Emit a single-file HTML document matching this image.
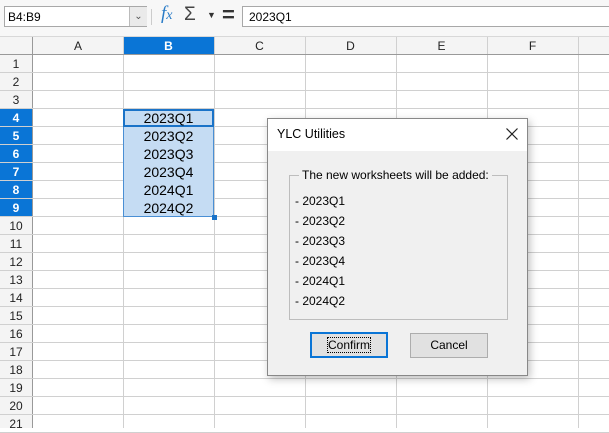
<!DOCTYPE html>
<html><head><style>
body{margin:0;width:609px;height:428px;overflow:hidden;background:#fff;font-family:"Liberation Sans",sans-serif;position:relative}
.a{position:absolute}
.tb{left:0;top:0;width:609px;height:36px;background:#f7f7f7;border-bottom:1px solid #d8d8d8}
.cell{font-size:14px;color:#000}
.vl{position:absolute;width:1px;background:#d0d0d0;top:37px;height:391px}
.hl{position:absolute;height:1px;background:#d0d0d0;left:0;width:609px}
.rh{position:absolute;left:0;width:32px;height:18px;line-height:18px;text-align:center;font-size:12px;color:#222}
.ch{position:absolute;top:37px;height:18px;line-height:18px;text-align:center;font-size:12px;color:#222}
</style></head><body>
<div class="a tb"></div>
<div class="a" style="left:4px;top:6px;width:143px;height:21px;border:1px solid #a8a8a8;background:#fff;font-size:12px;line-height:21px;padding-left:3px;box-sizing:border-box">B4:B9</div>
<div class="a" style="left:129px;top:7px;width:17px;height:19px;background:#eaeaea;border-left:1px solid #bbb;text-align:center;font-size:10px;line-height:19px;color:#555">&#8964;</div>
<div class="a" style="left:151px;top:9px;width:1px;height:16px;background:#ccc"></div>
<div class="a" style="left:161px;top:3px;font-family:'Liberation Serif',serif;font-style:italic;font-size:19px;color:#2a7cc7">f<span style="font-size:14px">x</span></div>
<div class="a" style="left:184px;top:4px;font-size:19px;color:#444">&Sigma;</div>
<div class="a" style="left:207px;top:10px;font-size:9px;color:#333">&#9660;</div>
<div class="a" style="left:222px;top:2px;font-size:22px;color:#333;font-weight:bold">=</div>
<div class="a" style="left:242px;top:6px;width:370px;height:21px;border:1px solid #a8a8a8;background:#fff;font-size:12px;line-height:21px;padding-left:6px;box-sizing:border-box">2023Q1</div>

<div class="a" style="left:0;top:37px;width:609px;height:18px;background:#f4f4f4"></div>
<div class="a" style="left:0;top:55px;width:32px;height:373px;background:#f4f4f4"></div>
<div class="a" style="left:123px;top:37px;width:91px;height:18px;background:#0a75d6"></div>
<div class="a" style="left:0;top:109px;width:32px;height:108px;background:#0a75d6"></div>
<div class="ch" style="left:33px;width:90px">A</div>
<div class="ch" style="left:123px;width:91px;color:#fff;font-weight:bold">B</div>
<div class="ch" style="left:214px;width:91px">C</div>
<div class="ch" style="left:305px;width:91px">D</div>
<div class="ch" style="left:396px;width:91px">E</div>
<div class="ch" style="left:487px;width:91px">F</div>

<div class="vl" style="left:32px;background:#999"></div><div class="vl" style="left:123px"></div><div class="vl" style="left:214px"></div><div class="vl" style="left:305px"></div><div class="vl" style="left:396px"></div><div class="vl" style="left:487px"></div><div class="vl" style="left:578px"></div>
<div class="hl" style="top:54px;background:#999"></div>
<div id="rows"></div>
<script>
var h='';for(var i=1;i<=21;i++){var t=55+(i-1)*18;h+='<div class="hl" style="top:'+(t+17)+'px"></div>';var s=(i>=4&&i<=9)?'color:#fff;font-weight:bold;':'';h+='<div class="rh" style="top:'+t+'px;'+s+'">'+i+'</div>';}
document.getElementById('rows').innerHTML=h;
</script>
<div class="a" style="left:123px;top:109px;width:91px;height:108px;background:#c5dcf3;border:1px solid #4a8fd4;box-sizing:border-box"></div>
<div class="a" style="left:123px;top:109px;width:91px;height:18px;border:2px solid #1a73c8;box-sizing:border-box"></div>
<div class="a" style="left:212px;top:215px;width:5px;height:5px;background:#1a73c8"></div>
<div class="a cell" style="left:123px;top:109px;width:91px;text-align:center;line-height:18px">2023Q1<br>2023Q2<br>2023Q3<br>2023Q4<br>2024Q1<br>2024Q2</div>

<div class="a" style="left:267px;top:118px;width:261px;height:258px;background:#f0f0f0;border:1px solid #888;box-sizing:border-box;box-shadow:2px 3px 8px rgba(0,0,0,.25)">
<div style="height:32px;background:#fff;font-size:12.5px;line-height:30px;padding-left:9px">YLC Utilities</div>
<svg class="a" style="right:9px;top:9px" width="12" height="12"><path d="M0.5 0.5L11.5 11.5M11.5 0.5L0.5 11.5" stroke="#222" stroke-width="1.2"/></svg>
<div class="a" style="left:21px;top:56px;width:219px;height:145px;border:1px solid #bdbdbd;box-sizing:border-box"></div>
<div class="a" style="left:31px;top:48px;padding:0 3px;background:#f0f0f0;font-size:12px;line-height:16px">The new worksheets will be added:</div>
<div class="a" style="left:27px;top:72px;font-size:12px;line-height:20px">- 2023Q1<br>- 2023Q2<br>- 2023Q3<br>- 2023Q4<br>- 2024Q1<br>- 2024Q2</div>
<div class="a" style="left:42px;top:213px;width:78px;height:26px;border:2px solid #0a75d6;background:#e1e1e1;box-sizing:border-box;font-size:12px;text-align:center;line-height:22px"><span style="outline:1px dotted #000">Confirm</span></div>
<div class="a" style="left:142px;top:214px;width:78px;height:25px;border:1px solid #adadad;background:#e1e1e1;box-sizing:border-box;font-size:12px;text-align:center;line-height:23px">Cancel</div>
</div>
</body></html>
